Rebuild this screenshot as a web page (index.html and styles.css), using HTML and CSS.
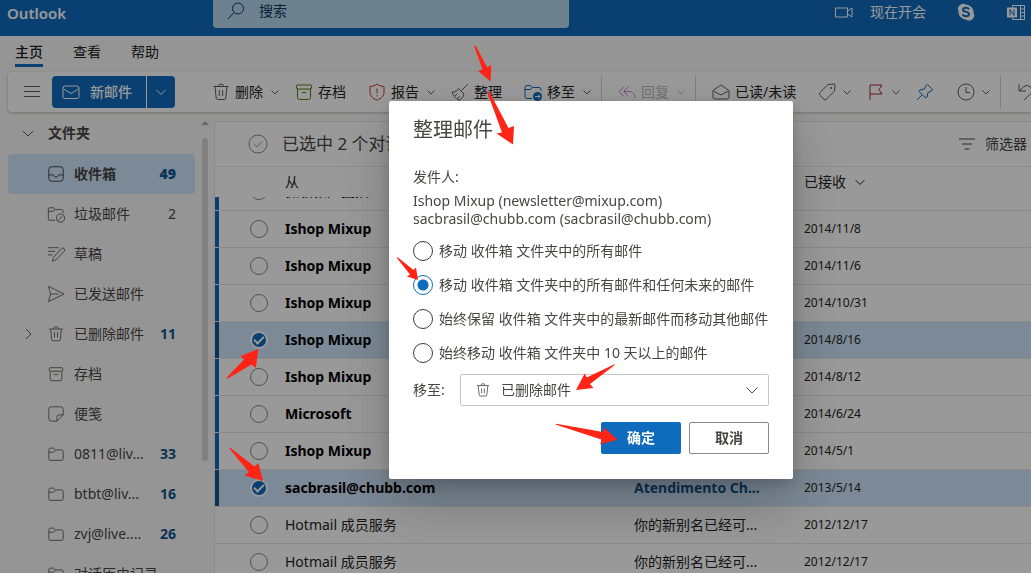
FILE: index.html
```
<!DOCTYPE html>
<html lang="zh-CN">
<head>
  <meta charset="utf-8">
  <title>Outlook</title>
  <link rel="stylesheet" href="styles.css">
</head>
<body>
  <!-- shared icons -->
  <svg class="sprite" aria-hidden="true">
    <symbol id="i-down" viewBox="0 0 12 12"><path d="M2.5 4.5 6 8l3.500-3.500"/></symbol>
    <symbol id="i-trash" viewBox="0 0 20 20"><path d="M2.500 4.500h15M7.500 4.500a2.500 2.500 0 0 1 5 0M4 4.500l1.200 11.500a1.700 1.700 0 0 0 1.700 1.500h6.200a1.700 1.700 0 0 0 1.700-1.500L16 4.500M8.300 8v6M11.700 8v6"/></symbol>
    <symbol id="i-archive" viewBox="0 0 20 20"><rect x="2.500" y="3" width="15" height="4" rx="1"/><path d="M3.500 7v8.500a2 2 0 0 0 2 2h9a2 2 0 0 0 2-2V7M8 10.500h4"/></symbol>
    <symbol id="i-folder" viewBox="0 0 20 20"><path d="M2 5.500a2 2 0 0 1 2-2h3.200l2.300 2H16a2 2 0 0 1 2 2V15a2 2 0 0 1-2 2H4a2 2 0 0 1-2-2zM2 8h5.200l2.300-2.500"/></symbol>
  </svg>

  <div class="app">
    <header class="topbar">
      <h1>Outlook</h1>
      <label class="search">
        <svg class="icon" viewBox="0 0 20 20"><circle cx="12" cy="7.500" r="5.500"/><path d="M8 11.500 2 18"/></svg>
        <input type="text" placeholder="搜索" aria-label="搜索">
      </label>
      <nav class="top-links">
        <a href="#meet">
          <svg class="icon" viewBox="0 0 20 20"><path d="M1.500 6h12v9h-12zM13.500 9l4.500-3v9l-4.500-3"/></svg>
          现在开会
        </a>
        <a href="#skype" aria-label="Skype">
          <svg class="icon" viewBox="0 0 20 20"><path class="solid" d="M6 2a5 5 0 0 1 3.500.5A8 8 0 0 1 17.500 11 5 5 0 0 1 10.500 17.700 8 8 0 0 1 2.500 9 5 5 0 0 1 6 2z"/><path class="mark" d="M13 7.500C12.500 6 11.500 5.700 10 5.700c-1.800 0-3 .7-3 2 0 2.800 6 1.600 6 4.400 0 1.500-1.300 2.200-3 2.200-1.600 0-2.800-.6-3.200-2"/></svg>
        </a>
        <a href="#onenote" aria-label="OneNote">
          <svg class="icon" viewBox="0 0 20 20"><path d="M6.500 5.500v-2h12v14h-12v-2M14.500 3.500v14M14.500 7h4M14.500 10.500h4M14.500 14h4"/><path class="solid" d="M1 5.500h10v10H1z"/><path class="mark thin" d="M4 13.500v-6l4 6v-6"/></svg>
        </a>
      </nav>
    </header>

    <nav class="tabs">
      <a class="active" href="#home">主页</a>
      <a href="#view">查看</a>
      <a href="#help">帮助</a>
    </nav>

    <div class="toolbar">
      <button class="menu" aria-label="菜单"><svg class="icon" viewBox="0 0 20 20"><path d="M2 4.500h16M2 9.500h16M2 14.500h16"/></svg></button>
      <div class="new-mail">
        <button class="new-main">
          <svg class="icon" viewBox="0 0 20 20"><rect x="2" y="4" width="16" height="12.500" rx="2"/><path d="m2.500 7 7.500 4.500L17.500 7"/></svg>
          新邮件
        </button>
        <button class="new-more" aria-label="更多"><svg class="caret" viewBox="0 0 12 12"><path d="M1.500 4 6 8.500 10.500 4"/></svg></button>
      </div>
      <div class="group first">
        <button><svg class="icon"><use href="#i-trash"/></svg><span>删除</span><svg class="caret"><use href="#i-down"/></svg></button>
        <button class="plain"><svg class="icon green"><use href="#i-archive"/></svg><span>存档</span></button>
        <button><svg class="icon red" viewBox="0 0 20 20"><path d="M10 2c2 1.600 4.200 2.300 7 2.500V10c0 4-2.500 6.500-7 8.200C5.500 16.500 3 14 3 10V4.500C5.800 4.300 8 3.600 10 2zM10 6.500v5M10 13.200v1.200"/></svg><span>报告</span><svg class="caret"><use href="#i-down"/></svg></button>
        <button class="plain"><svg class="icon" viewBox="0 0 20 20"><path d="m18 2-6.300 6.300M8.500 6.500l5.500 5.500M8.500 6.500C7.500 9 5 10 2 10.200c1.200 3.300 3.700 6.500 7 8 2.500-1.200 4.500-3.400 5-6.200M5 13.800l2.300-2M7.500 16.500l2.500-2.300"/></svg><span>整理</span></button>
        <button><svg class="icon blue" viewBox="0 0 20 20"><path d="M9 16.500H4a2 2 0 0 1-2-2v-9a2 2 0 0 1 2-2h3.200l2.300 2H16a2 2 0 0 1 2 2V9M2 7.500h5.200l2.300-2"/><circle class="solid" cx="14.500" cy="14.500" r="4.500"/><path class="cut" d="M12 14.500h5M15 12.500l2 2-2 2"/></svg><span>移至</span><svg class="caret"><use href="#i-down"/></svg></button>
      </div>
      <div class="group">
        <button class="disabled" disabled><svg class="icon purple" viewBox="0 0 20 20"><path d="M7 4.500 2 9.500l5 5M11.500 4.500l-5 5 5 5M6.500 9.500H12c3.500 0 6 2.500 6 6.500"/></svg><span>回复</span><svg class="caret"><use href="#i-down"/></svg></button>
      </div>
      <div class="group">
        <button class="plain"><svg class="icon" viewBox="0 0 20 20"><path d="M2 8.500 10 3l8 5.500V15a2 2 0 0 1-2 2H4a2 2 0 0 1-2-2zM2.500 9 10 13l7.500-4"/></svg><span>已读/未读</span></button>
        <button aria-label="标记"><svg class="icon" viewBox="0 0 20 20"><path d="M11 2.500 17 2a1 1 0 0 1 1 1l-.5 6-8.300 8.300a1.500 1.500 0 0 1-2.200 0l-4.300-4.300a1.500 1.500 0 0 1 0-2.200z"/><circle cx="14" cy="6" r=".7"/></svg><svg class="caret"><use href="#i-down"/></svg></button>
        <button aria-label="标志"><svg class="icon darkred" viewBox="0 0 20 20"><path d="M4 18V3h12l-3 4.500 3 4.500H4"/></svg><svg class="caret"><use href="#i-down"/></svg></button>
        <button class="plain" aria-label="固定"><svg class="icon blue" viewBox="0 0 20 20"><path d="m12.500 2.500 5 5-1 1.500-3.500 1.500-1 4.500-1.500 1-6.500-6.500 1-1.500L9.500 7 11 3.500zM7 13l-5 5"/></svg></button>
        <button aria-label="暂停"><svg class="icon" viewBox="0 0 20 20"><circle cx="10" cy="10" r="8"/><path d="M10 5v5.500h4"/></svg><svg class="caret"><use href="#i-down"/></svg></button>
      </div>
      <div class="group">
        <button aria-label="撤消"><svg class="icon" viewBox="0 0 20 20"><path d="M3 2v7h7M3 9l5-4.500a5 5 0 0 1 7 7L8 18"/></svg></button>
      </div>
    </div>

    <div class="content">
      <aside class="sidebar">
        <div class="folders">
          <h2 class="folder heading"><svg class="caret" viewBox="0 0 12 12"><path d="M1 4 6 9l5-5"/></svg>文件夹</h2>
          <a class="folder current" href="#inbox"><svg class="icon" viewBox="0 0 20 20"><rect x="2" y="2" width="16" height="16" rx="3"/><path d="M2 11h5c.5 3 5.500 3 6 0h5"/></svg><span>收件箱</span><b>49</b></a>
          <a class="folder" href="#junk"><svg class="icon" viewBox="0 0 20 20"><path d="M9 17H3.500A1.800 1.800 0 0 1 1.500 15V5a1.800 1.800 0 0 1 2-2H7l2 2h7a2 2 0 0 1 2 2v2M1.500 7H7l2-2"/><circle cx="15" cy="14.500" r="4.500"/><path d="m12 17.500 6-6"/></svg><span>垃圾邮件</span><i>2</i></a>
          <a class="folder" href="#drafts"><svg class="icon" viewBox="0 0 20 20"><path d="M1 3h12M1 7h8M1 11h5M6 18l1-4L16 4a2 2 0 0 1 3 3l-9 9.500-4 1.500z"/></svg><span>草稿</span></a>
          <a class="folder" href="#sent"><svg class="icon" viewBox="0 0 20 20"><path d="M1.500 1.500 19 10 1.500 18.500 4 10zM4 10h9"/></svg><span>已发送邮件</span></a>
          <a class="folder" href="#deleted"><svg class="caret" viewBox="0 0 12 12"><path d="m4 1 5 5-5 5"/></svg><svg class="icon"><use href="#i-trash"/></svg><span>已删除邮件</span><b>11</b></a>
          <a class="folder" href="#archive"><svg class="icon"><use href="#i-archive"/></svg><span>存档</span></a>
          <a class="folder" href="#notes"><svg class="icon" viewBox="0 0 20 20"><path d="M18 11V5a3 3 0 0 0-3-3H5a3 3 0 0 0-3 3v10a3 3 0 0 0 3 3h6l7-7h-4.500a2.500 2.500 0 0 0-2.500 2.500V18"/></svg><span>便笺</span></a>
          <a class="folder" href="#f1"><svg class="icon"><use href="#i-folder"/></svg><span>0811@liv...</span><b>33</b></a>
          <a class="folder" href="#f2"><svg class="icon"><use href="#i-folder"/></svg><span>btbt@liv...</span><b>16</b></a>
          <a class="folder" href="#f3"><svg class="icon"><use href="#i-folder"/></svg><span>zvj@live....</span><b>26</b></a>
          <a class="folder" href="#f4"><svg class="icon"><use href="#i-folder"/></svg><span>对话历史记录</span></a>
        </div>
        <div class="scrollbar"><span class="up"></span><span class="thumb"></span></div>
      </aside>

      <main class="list">
        <div class="selection">
          <svg class="check-icon" viewBox="0 0 20 20"><circle cx="10" cy="10" r="9"/><path d="m6.500 10.500 2.300 2.300L14 7.500"/></svg>
          <span class="selected-count">已选中 2 个对话</span>
          <button class="filter"><svg class="icon" viewBox="0 0 20 20"><path d="M2 5h16M5 10h10M7.500 15h5"/></svg>筛选器</button>
        </div>
        <div class="columns">
          <span class="col-from">从</span>
          <button class="col-date">已接收<svg class="caret" viewBox="0 0 12 12"><path d="M1.500 4 6 8.500 10.500 4"/></svg></button>
        </div>
        <div class="rows">
          <table>
            <colgroup><col class="w-check"><col><col class="w-subject"><col class="w-date"></colgroup>
            <tbody>
              <tr class="unread"><td><input type="checkbox" aria-label="选择"></td><td>微软帐户团队</td><td></td><td>2014/11/9</td></tr>
              <tr class="unread"><td><input type="checkbox" aria-label="选择"></td><td>Ishop Mixup</td><td></td><td>2014/11/8</td></tr>
              <tr class="unread"><td><input type="checkbox" aria-label="选择"></td><td>Ishop Mixup</td><td></td><td>2014/11/6</td></tr>
              <tr class="unread"><td><input type="checkbox" aria-label="选择"></td><td>Ishop Mixup</td><td></td><td>2014/10/31</td></tr>
              <tr class="unread selected"><td><input type="checkbox" aria-label="选择" checked></td><td>Ishop Mixup</td><td></td><td>2014/8/16</td></tr>
              <tr class="unread"><td><input type="checkbox" aria-label="选择"></td><td>Ishop Mixup</td><td></td><td>2014/8/12</td></tr>
              <tr class="unread"><td><input type="checkbox" aria-label="选择"></td><td>Microsoft</td><td></td><td>2014/6/24</td></tr>
              <tr class="unread"><td><input type="checkbox" aria-label="选择"></td><td>Ishop Mixup</td><td></td><td>2014/5/1</td></tr>
              <tr class="unread selected"><td><input type="checkbox" aria-label="选择" checked></td><td>sacbrasil@chubb.com</td><td>Atendimento Ch...</td><td>2013/5/14</td></tr>
              <tr><td><input type="checkbox" aria-label="选择"></td><td>Hotmail 成员服务</td><td>你的新别名已经可...</td><td>2012/12/17</td></tr>
              <tr><td><input type="checkbox" aria-label="选择"></td><td>Hotmail 成员服务</td><td>你的新别名已经可...</td><td>2012/12/17</td></tr>
            </tbody>
          </table>
        </div>
      </main>
    </div>
  </div>

  <div class="backdrop">
    <form class="dialog" role="dialog" aria-labelledby="dialog-title">
      <h2 id="dialog-title">整理邮件</h2>
      <p class="from-label">发件人:</p>
      <p class="addresses">Ishop Mixup (newsletter@mixup.com)<br>sacbrasil@chubb.com (sacbrasil@chubb.com)</p>
      <div class="options">
        <label><input type="radio" name="rule">移动 收件箱 文件夹中的所有邮件</label>
        <label><input type="radio" name="rule" checked>移动 收件箱 文件夹中的所有邮件和任何未来的邮件</label>
        <label><input type="radio" name="rule">始终保留 收件箱 文件夹中的最新邮件而移动其他邮件</label>
        <label><input type="radio" name="rule">始终移动 收件箱 文件夹中 10 天以上的邮件</label>
      </div>
      <div class="move-row">
        <label for="target">移至:</label>
        <div class="select-box">
          <select id="target"><option>已删除邮件</option></select>
          <svg class="icon"><use href="#i-trash"/></svg>
          <svg class="caret" viewBox="0 0 12 12"><path d="M.5 3.500 6 9l5.500-5.500"/></svg>
        </div>
      </div>
      <div class="actions">
        <button type="button" class="ok">确定</button>
        <button type="button" class="cancel">取消</button>
      </div>
    </form>
  </div>

  <!-- step arrows -->
  <svg class="arrows" width="1031" height="573" viewBox="0 0 1031 573" aria-hidden="true">
    <path d="M474 46l1.500-.5L487 67l4.300-1.500-.8 16L478 71l4.500-1.500z"/>
    <path d="M487 91.500l2.500.5 19 36 5.500-2-1 18.500-16.500-11 5.500-1z"/>
    <path d="M396.500 257.500l1.500 0L413.500 270l2.500-2.500 2 12.500-11-3.500 3-2z"/>
    <path d="M227 379l-.3-1.500L244 359.500l-3.500-3.500 18-7-2.800 19-4.200-3.500z"/>
    <path d="M229 448l1.500 0L254.500 466.500l3.800-3.500 4.800 18-18.400-5.500 4-3.500z"/>
    <path d="M615 364l-.5 1.300L590 384l3.500 4-17.500 2 8.700-16.500 2 4z"/>
    <path d="M555.500 424.500l.8-.8L603 432l.8-4.500 13.700 12.300-17.500 4.500 2-4.500z"/>
  </svg>
</body>
</html>
```
FILE: styles.css
```
* {
  box-sizing: border-box;
}
body {
  margin: 0;
  height: 100vh;
  overflow: hidden;
  font-family: "Noto Sans", "Noto Sans CJK SC", sans-serif;
  font-size: 14px;
  line-height: 20px;
  color: #484644;
  background-color: #faf9f8;
}
h1, h2, p {
  margin: 0;
}
a {
  color: inherit;
  text-decoration: none;
}
button, input, select {
  font: inherit;
  color: inherit;
}
button {
  display: flex;
  align-items: center;
  padding: 0;
  border: 0;
  background: none;
  white-space: nowrap;
}
.sprite {
  position: absolute;
  width: 0;
  height: 0;
}
.icon, .caret, .check-icon {
  flex: none;
  width: 20px;
  height: 20px;
  fill: none;
  stroke: currentColor;
  stroke-width: 1;
}
.caret {
  width: 12px;
  height: 12px;
}
.solid {
  fill: currentColor;
  stroke: none;
}
.cut { stroke: #fff; }

/* top bar */
.app {
  display: flex;
  flex-direction: column;
  height: 100vh;
}
.topbar {
  display: flex;
  flex: none;
  height: 36px;
  color: #fff;
  background-color: #0f6cbd;
}
.topbar h1 {
  width: 213px;
  padding: 3px 7px;
  font-size: 15px;
  font-weight: 600;
  line-height: 20px;
}
.search {
  display: flex;
  align-items: center;
  gap: 13px;
  width: 356px;
  height: 28px;
  padding: 0 13px 6px;
  color: #0c3b5e;
  background-color: #b7d7ee;
  border-radius: 0 0 4px 4px;
}
.search input {
  flex: 1;
  min-width: 0;
  padding: 0;
  border: 0;
  outline: 0;
  background: none;
}
.search input::placeholder {
  color: #0c3b5e;
  opacity: 1;
}
.top-links {
  display: flex;
  gap: 30px;
  height: 23px;
  margin-left: auto;
  padding-right: 5px;
}
.top-links a {
  display: flex;
  align-items: center;
  gap: 16px;
}
.mark {
  stroke: #0f6cbd;
  stroke-width: 2;
}
.thin {
  stroke-width: 1;
}
.tabs {
  display: flex;
  flex: none;
  gap: 30px;
  height: 36px;
  padding: 6px 15px 5px;
  color: #242424;
}
.tabs .active {
  border-bottom: 3px solid #0f6cbd;
  font-weight: 500;
}

/* toolbar */
.toolbar {
  display: flex;
  flex: none;
  align-items: center;
  height: 40px;
  margin-left: 8px;
  padding-left: 14px;
  color: #242424;
  background-color: #fff;
  border-radius: 4px 0 0 4px;
  box-shadow: 0 1px 3px rgba(0, 0, 0, 0.25);
}
.toolbar .icon {
  color: #616161;
}
.toolbar .green { color: #498205; }
.toolbar .red { color: #d13438; }
.toolbar .darkred { color: #a4262c; }
.toolbar .blue { color: #0f6cbd; }
.toolbar .purple { color: #c586d0; }
.new-mail {
  display: flex;
  margin-left: 10px;
  height: 32px;
  color: #fff;
  background-color: #0f6cbd;
  border-radius: 4px;
}
.new-mail .icon {
  color: #fff;
}
.new-main {
  gap: 9px;
  width: 94px;
  padding-left: 9px;
  font-weight: 500;
}
.new-more {
  justify-content: center;
  width: 29px;
  border-left: 1px solid #fff;
}
.group {
  display: flex;
  gap: 13px;
  height: 32px;
  padding: 0 8px 0 15px;
  border-right: 1px solid #d1d1d1;
}
.group.first {
  padding-left: 36px;
}
.group:last-child {
  padding-right: 0;
  border: 0;
}
.group button {
  gap: 4px;
}
.group .caret {
  color: #616161;
}
.group span + .caret {
  margin-left: 2px;
}
.group .plain {
  padding-right: 8px;
}
.group .disabled, .group .disabled .caret {
  color: #bdbdbd;
}

/* folders */
.content {
  display: flex;
  flex: 1;
  min-height: 0;
}
.sidebar {
  display: flex;
  flex: none;
  width: 214px;
  padding-left: 8px;
}
.folders {
  flex: 1;
  overflow: hidden;
}
.folder {
  display: grid;
  grid-template-columns: 40px 16px 1fr auto;
  align-items: center;
  height: 40px;
  padding-right: 19px;
  border-radius: 4px;
  white-space: nowrap;
}
.folder .icon {
  grid-column: 2;
  width: 18px;
  height: 18px;
  margin: 0 -1px;
  color: #616161;
}
.folder .caret {
  justify-self: center;
  color: #616161;
}
.folder span {
  padding-left: 10px;
}
.folder b {
  color: #0f548c;
}
.folder i {
  font-style: normal;
}
.folder.heading {
  grid-template-columns: 40px 1fr;
  height: 42px;
  font-size: 14px;
}
.folder.current {
  background-color: #cfe4fa;
  font-weight: 700;
}
.folder.current .icon {
  color: #3b3a39;
}
.scrollbar {
  display: flex;
  flex-direction: column;
  align-items: center;
  gap: 13px;
  width: 18px;
  margin-left: 1px;
  padding-top: 9px;
}
.scrollbar .up {
  border: 4px solid transparent;
  border-top: 0;
  border-bottom-color: #a3adb2;
}
.scrollbar .thumb {
  width: 6px;
  height: 323px;
  border-radius: 3px;
  background-color: #d6d6d6;
}

/* message list */
.list {
  display: flex;
  flex: 1;
  flex-direction: column;
  min-width: 0;
  margin-top: 9px;
  background-color: #fff;
  border: 1px solid #e8e8e8;
  border-width: 1px 0 0 1px;
}
.selection {
  display: flex;
  align-items: center;
  height: 45px;
  padding: 0 4px 0 33px;
  border-bottom: 1px solid #e8e8e8;
}
.check-icon {
  color: #8a8a8a;
}
.selected-count {
  margin-left: 14px;
  font-size: 17px;
}
.filter {
  gap: 8px;
  margin-left: auto;
}
.columns {
  display: flex;
  align-items: center;
  justify-content: space-between;
  height: 30px;
  padding-left: 70px;
  color: #242424;
}
.col-date {
  gap: 8px;
  width: 227px;
}
.rows {
  flex: 1;
  overflow: hidden;
}
/* the first row is scrolled partly under the header */
.rows table {
  width: 100%;
  margin-top: -24px;
  table-layout: fixed;
  border-collapse: collapse;
  color: #242424;
}
.w-check { width: 70px; }
.w-subject { width: 170px; }
.w-date { width: 227px; }
.rows td {
  height: 37px;
  padding: 0;
  border-bottom: 1px solid #e8e8e8;
  white-space: nowrap;
}
.rows td:first-child {
  padding-left: 35px;
}
.rows td:last-child {
  font-size: 12px;
}
.rows .unread td:first-child {
  background: linear-gradient(to right, #0f6cbd 4px, transparent 4px);
}
.rows .unread td:nth-child(2) {
  font-weight: 700;
  color: #000;
}
.rows .unread td:nth-child(3) {
  font-weight: 700;
  color: #0f548c;
}
.rows .selected {
  background-color: #cfe4fa;
}
.rows .selected td:first-child {
  background: linear-gradient(to right, #0f548c 4px, transparent 4px);
}
.rows input {
  display: block;
  width: 18px;
  height: 18px;
  margin: 0;
  appearance: none;
  border: 1px solid #8a8a8a;
  border-radius: 50%;
}
.rows input:checked {
  display: grid;
  place-items: center;
  border: 2px solid #fff;
  background-color: #0f6cbd;
}
.rows input:checked::before {
  content: "";
  width: 8px;
  height: 4px;
  margin-bottom: 2px;
  border: 2px solid #fff;
  border-width: 0 0 2px 2px;
  transform: rotate(-45deg);
}

/* dialog */
.backdrop {
  position: fixed;
  inset: 0;
  display: grid;
  place-items: center;
  padding: 7px 0 0 151px;
  background-color: rgba(0, 0, 0, 0.4);
}
.dialog {
  width: 404px;
  padding: 15px 24px 25px;
  background-color: #fff;
  border-radius: 2px;
  box-shadow: 0 26px 58px rgba(0, 0, 0, 0.22), 0 5px 14px rgba(0, 0, 0, 0.18);
}
.dialog h2 {
  font-size: 20px;
  font-weight: 400;
  line-height: 28px;
}
.from-label {
  margin-top: 23px;
}
.addresses {
  margin-top: 5px;
  line-height: 18px;
}
.options {
  display: grid;
  gap: 14px;
  margin-top: 13px;
}
.options label {
  display: flex;
  align-items: center;
  gap: 6px;
  height: 20px;
  white-space: nowrap;
}
.options input {
  flex: none;
  width: 20px;
  height: 20px;
  margin: 0;
  appearance: none;
  border: 1px solid #3b3a39;
  border-radius: 50%;
}
.options input:checked {
  border-color: #0f6cbd;
  background: radial-gradient(circle, #0f6cbd 5px, transparent 6px);
}
.move-row {
  display: flex;
  align-items: center;
  justify-content: space-between;
  margin-top: 11px;
}
.select-box {
  position: relative;
  width: 309px;
}
.select-box select {
  width: 100%;
  height: 32px;
  padding: 0 40px;
  appearance: none;
  border: 1px solid #c8c6c4;
  border-radius: 2px;
  background: #fff;
}
.select-box .icon {
  position: absolute;
  top: 8px;
  left: 15px;
  width: 16px;
  height: 16px;
}
.select-box .caret {
  position: absolute;
  top: 10px;
  right: 11px;
}
.actions {
  display: flex;
  justify-content: flex-end;
  gap: 8px;
  margin-top: 16px;
}
.actions button {
  justify-content: center;
  width: 80px;
  height: 32px;
  border-radius: 2px;
  font-weight: 700;
}
.actions .ok {
  color: #fff;
  background-color: #0f6cbd;
}
.actions .cancel {
  border: 1px solid #8a8886;
}
.arrows {
  position: absolute;
  top: 0;
  left: 0;
  fill: #ff2415;
  pointer-events: none;
}
```
